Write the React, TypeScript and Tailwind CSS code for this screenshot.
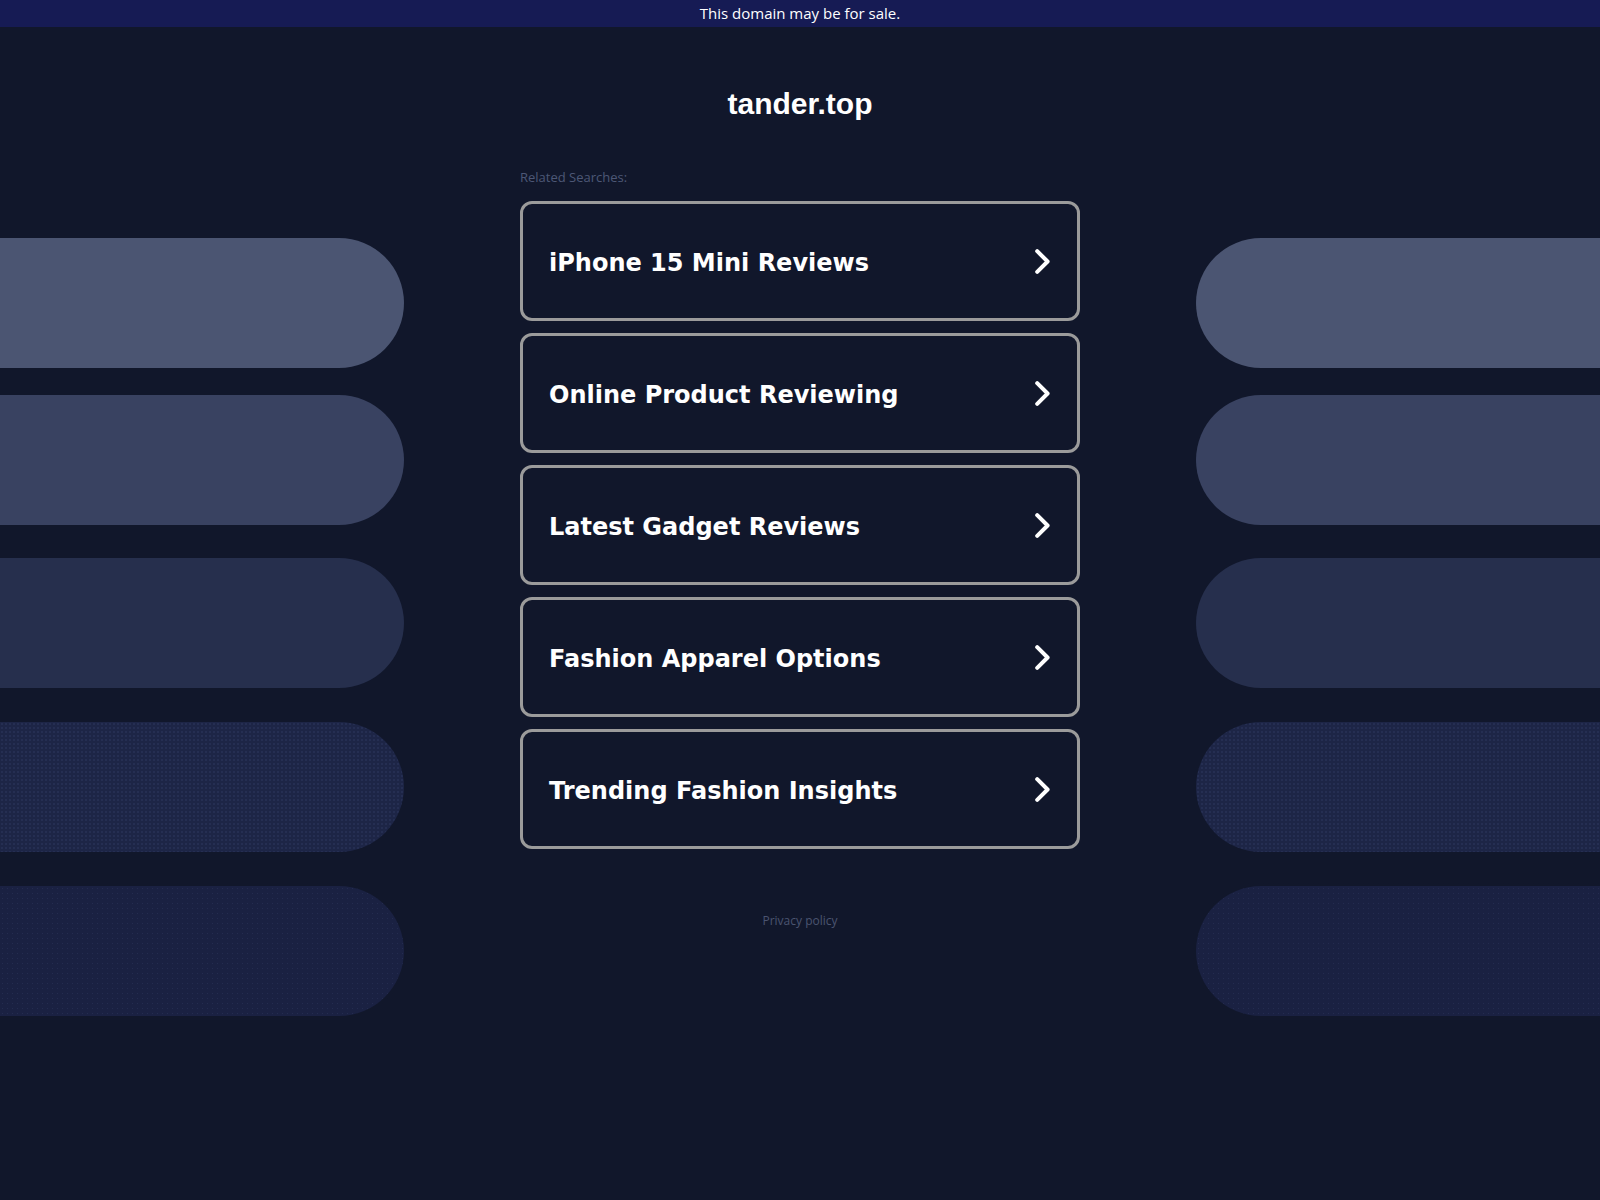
import React from 'react';

const searches = [
  'iPhone 15 Mini Reviews',
  'Online Product Reviewing',
  'Latest Gadget Reviews',
  'Fashion Apparel Options',
  'Trending Fashion Insights',
];

// decorative side pills, top margin between each
const pills = [
  { mt: 'mt-[211px]', bg: 'bg-[#4b5572]' },
  { mt: 'mt-[27px]', bg: 'bg-[#394261]' },
  { mt: 'mt-[33px]', bg: 'bg-[#262f4d]' },
  { mt: 'mt-[34px]', bg: 'bg-[#1d2546] bg-[radial-gradient(#252e52_0.8px,transparent_0.8px)] bg-[length:4px_4px]' },
  { mt: 'mt-[34px]', bg: 'bg-[#1a2142] bg-[radial-gradient(#242c50_0.8px,transparent_0.8px)] bg-[length:5px_5px]' },
];

function Chevron() {
  return (
    <svg width="15" height="25" viewBox="0 0 15 25" fill="none" className="shrink-0">
      <path d="M2.2 2.2 L12.6 12.5 L2.2 22.8" stroke="#ffffff" strokeWidth="4" strokeLinecap="round" strokeLinejoin="round" />
    </svg>
  );
}

function PillColumn({ side }: { side: 'left' | 'right' }) {
  return (
    <div className="flex flex-col">
      {pills.map((p, i) => (
        <div
          key={i}
          className={`${p.mt} h-[130px] ${p.bg} ${side === 'left' ? 'rounded-r-full' : 'rounded-l-full'}`}
        />
      ))}
    </div>
  );
}

export default function App() {
  return (
    <div className="min-h-[1200px] bg-[#11172b] font-['Open_Sans',sans-serif]">
      <div className="flex h-[27px] items-center justify-center bg-[#161b54] text-[15px] font-medium text-white">
        This domain may be for sale.
      </div>

      <main className="grid grid-cols-[404px_1fr_404px]">
        <PillColumn side="left" />

        <div className="flex flex-col items-center pt-[62px]">
          <h1 className="h-[30px] font-['Liberation_Sans',Arial,sans-serif] text-[30px] font-bold leading-[30px] text-white">
            tander.top
          </h1>

          <div className="mt-[50px] w-[560px]">
            <p className="h-4 text-[13px] leading-4 text-[#4d5776]">Related Searches:</p>

            <div className="mt-4 flex flex-col gap-3">
              {searches.map((s) => (
                <a
                  key={s}
                  href="#"
                  className="flex h-[120px] items-center justify-between rounded-[12px] border-[3px] border-[#9b9b9b] pl-[26px] pr-[27px]"
                >
                  <span className="pt-1 font-['DejaVu_Sans',Verdana,sans-serif] text-[24px] font-bold text-white">{s}</span>
                  <Chevron />
                </a>
              ))}
            </div>
          </div>

          <a href="#" className="mt-[65px] text-[12px] leading-[14px] text-[#4b5470]">
            Privacy policy
          </a>
        </div>

        <PillColumn side="right" />
      </main>
    </div>
  );
}
